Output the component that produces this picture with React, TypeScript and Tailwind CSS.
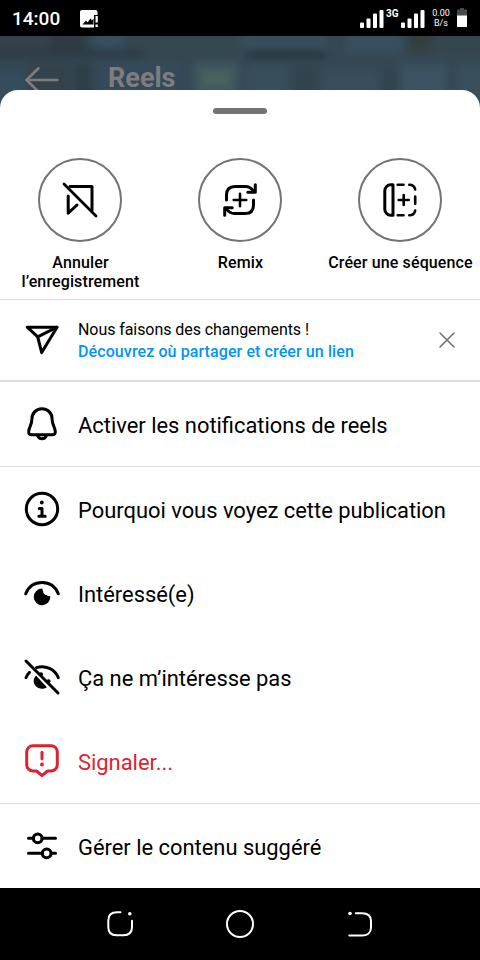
import React from 'react';
import clsx from 'clsx';

interface IconProps {
  children: React.ReactNode;
  className?: string;
}

/** 36px line icon; all the sheet icons are drawn on this grid. */
const Icon: React.FC<IconProps> = ({ children, className }) => (
  <svg
    viewBox="0 0 36 36"
    className={clsx('size-9 shrink-0 overflow-visible', className)}
    fill="none"
    stroke="currentColor"
    strokeWidth={3}
    strokeLinecap="round"
    strokeLinejoin="round"
    aria-hidden="true"
  >
    {children}
  </svg>
);

const UnsaveIcon = () => (
  <Icon>
    <path d="M2 2L34 34" strokeWidth={2.8} />
    <path d="M8 4.5H30V28.5" />
    <path d="M6.2 14V31.2L15 23" />
  </Icon>
);

const RemixIcon = () => (
  <Icon>
    <path d="M4.5 18V13C4.5 7.5 7.5 4.4 13 4.4H23.5C27.5 4.4 29.5 6 32 9.5" />
    <path d="M33.3 2.7V10.2H25.8" />
    <path d="M31.5 18V23C31.5 28.5 28.5 31.6 23 31.6H12.5C8.5 31.6 6.5 30 4 26.5" />
    <path d="M2.7 33.3V25.8H10.2" />
    <path d="M18 11.7V24.3M11.7 18H24.3" strokeWidth={2.6} />
  </Icon>
);

const SequenceIcon = () => (
  <Icon>
    <path d="M11 2.8H8.8A6 6 0 0 0 2.8 8.8V27.2A6 6 0 0 0 8.8 33.2H11Z" />
    <path
      d="M15.7 2.7H21.5M27.3 2.7A6 6 0 0 1 33.2 7.5M33.2 14.5V21.7M33.2 28.5A6 6 0 0 1 27.3 33.3M21.5 33.3H15.7"
      strokeWidth={2.6}
    />
    <path d="M21.7 13V23M16.7 18H26.7" strokeWidth={2.6} />
  </Icon>
);

const ShareIcon = () => (
  <Icon>
    <path d="M3.2 5.2H33L17.7 30.6L13.7 14.8Z" />
    <path d="M13.7 14.8L33 5.2" />
  </Icon>
);

const BellIcon = () => (
  <Icon>
    <path d="M18 2.8C11.7 2.8 7.9 7.5 7.9 13.3C7.9 19 5 20.5 4.7 25.5C4.6 27.7 5.6 28.7 7.5 28.7H28.5C30.4 28.7 31.4 27.7 31.3 25.5C31 20.5 28.1 19 28.1 13.3C28.1 7.5 24.3 2.8 18 2.8Z" />
    <path d="M13.5 29.5C14.3 31.7 15.9 32.7 18 32.7S21.7 31.7 22.5 29.5" />
  </Icon>
);

const InfoIcon = () => (
  <Icon>
    <circle cx="18" cy="18" r="15.7" />
    <circle cx="17.8" cy="11.5" r="1.9" fill="currentColor" stroke="none" />
    <path d="M15.2 17.5H18V25.2M14.8 25.3H21.2" />
  </Icon>
);

const EyeIcon = () => (
  <Icon>
    <path d="M1.7 18.8C4.5 12 10.5 7.6 18 7.6S31.5 12 34.3 18.8" />
    <path
      d="M18.4 13.6A8.3 8.3 0 1 0 26.3 21C24.5 21.4 23.5 20.9 22.5 20.1C20.5 19.8 19 18.3 19.2 16.2C18.5 15.3 18.2 14.5 18.4 13.6Z"
      fill="currentColor"
      stroke="none"
    />
  </Icon>
);

const EyeOffIcon = () => (
  <Icon>
    <path d="M2 2L34 34" />
    <path d="M2 18.7C2.9 16.5 3.9 15 5.5 13.3" />
    <path d="M12.5 8.6C21.5 5.7 31 10.2 34.3 18.7" />
    <path
      d="M12 16.5C9.2 19.5 8.8 24 11.7 27.1C14.6 30.200 19 30.700 22.900 28.300Z"
      fill="currentColor"
      stroke="none"
    />
    <g fill="currentColor" stroke="none">
      <circle cx="17" cy="15.3" r="2" />
      <circle cx="24.5" cy="22.3" r="2" />
    </g>
  </Icon>
);

const ReportIcon = () => (
  <Icon>
    <path d="M9 2.7H27A6.2 6.2 0 0 1 33.3 9V21.7A6.2 6.2 0 0 1 27 28H23.5L18 32.7L12.5 28H9A6.2 6.2 0 0 1 2.7 21.7V9A6.2 6.2 0 0 1 9 2.7Z" />
    <path d="M18 9.3V15.8" />
    <circle cx="18" cy="21.5" r="1.9" fill="currentColor" stroke="none" />
  </Icon>
);

const SlidersIcon = () => (
  <Icon>
    <path d="M4.5 10.3H9.4M18 10.3H31.5M4.5 25.3H18.4M27 25.3H31.5" />
    <circle cx="13.7" cy="10.3" r="4.4" />
    <circle cx="22.7" cy="25.3" r="4.4" />
  </Icon>
);

const SignalBars = () => (
  <svg viewBox="0 0 24 18" className="h-[18px] w-6 shrink-0" fill="white" aria-hidden="true">
    <rect x="0" y="12.5" width="4" height="5.5" rx="1" />
    <rect x="6.5" y="8.5" width="4" height="9.5" rx="1" />
    <rect x="13" y="3.5" width="4" height="14.5" rx="1" />
    <rect x="19.5" y="0" width="4" height="18" rx="1" />
  </svg>
);

const StatusBar = () => (
  <header className="flex h-9 items-center bg-black pl-3 pr-[13px] text-white">
    <span className="mt-px w-[68px] text-[19px] font-medium leading-9">14:00</span>
    <svg viewBox="0 0 19 18" className="mt-px h-[18px] w-[19px]" aria-hidden="true">
      <path d="M2 0H16A2 2 0 0 1 17.5 2V5H14V17.5H2A2 2 0 0 1 0 15.5V2A2 2 0 0 1 2 0Z" fill="white" />
      <path d="M2.5 14.5L6 10.5L7.5 12.5L10.5 8.5L12 10.5L13.5 8.5V14.5Z" fill="black" />
      <path d="M15.5 6H17.8V12.5H15.5ZM15.5 14.5H17.8V17H15.5Z" fill="white" />
    </svg>
    <div className="ml-auto mt-[2px] flex h-[18px] items-start">
      <SignalBars />
      <span className="ml-[2px] mr-[3px] w-3 text-[10px] font-bold leading-[7px]">3G</span>
      <SignalBars />
      <span className="-mt-[2px] ml-1 w-6 whitespace-nowrap text-center text-[9px] leading-[10px]">
        0.00
        <br />
        B/s
      </span>
      <svg viewBox="0 0 10 19" className="-mt-[2px] ml-1 h-[19px] w-[10px]" aria-hidden="true">
        <path d="M3 0H7V1.5H10V8H0V1.5H3Z" fill="#4a4a4a" />
        <path d="M0 7.5H10V19H0Z" fill="white" />
      </svg>
    </div>
  </header>
);

/** Dimmed video frame behind the sheet. */
const BrickWall = () => (
  <svg
    viewBox="0 0 480 90"
    className="absolute inset-x-0 top-0 h-[90px] w-[480px]"
    preserveAspectRatio="none"
    aria-hidden="true"
  >
    <defs>
      <filter id="soft" x="-5%" y="-5%" width="110%" height="110%" colorInterpolationFilters="sRGB">
        <feGaussianBlur stdDeviation="4" />
      </filter>
    </defs>
    <rect width="480" height="90" fill="#344753" />
    <g filter="url(#soft)">
      <rect x="-10" y="-10" width="500" height="110" fill="#344753" />
      <rect x="-10" y="-8" width="60" height="23" fill="#33424b" />
      <rect x="50" y="-8" width="36" height="22" fill="#2f3b42" />
      <rect x="94" y="-5" width="28" height="18" fill="#38505e" />
      <rect x="130" y="-8" width="110" height="24" fill="#35474f" />
      <rect x="240" y="-8" width="86" height="22" fill="#394e5c" />
      <rect x="-5" y="14" width="150" height="7" fill="#2b3943" />
      <rect x="246" y="15" width="80" height="7" fill="#27343b" />
      <rect x="346" y="-5" width="56" height="22" fill="#394f5e" />
      <rect x="408" y="-5" width="24" height="20" fill="#333e3e" />
      <rect x="440" y="-5" width="50" height="20" fill="#35464f" />
      <rect x="28" y="26" width="42" height="66" fill="#34424b" />
      <rect x="-8" y="36" width="34" height="62" fill="#344c5b" />
      <rect x="76" y="28" width="14" height="65" fill="#2e3d46" />
      <rect x="100" y="26" width="84" height="70" fill="#34495a" />
      <rect x="194" y="26" width="44" height="45" fill="#40585f" />
      <rect x="202" y="38" width="28" height="10" fill="#4c675f" />
      <rect x="246" y="28" width="42" height="70" fill="#384e5b" />
      <rect x="294" y="30" width="22" height="60" fill="#33434d" />
      <rect x="324" y="34" width="56" height="60" fill="#394e5a" />
      <rect x="384" y="32" width="12" height="60" fill="#32424d" />
      <rect x="400" y="28" width="46" height="66" fill="#3b5362" />
      <rect x="456" y="28" width="34" height="66" fill="#394f5b" />
    </g>
  </svg>
);

const ReelsHeader = () => (
  <div className="relative h-[54px]">
    <BrickWall />
    <div className="relative flex items-center pl-6 pt-[26px] text-[#7f7d7c]">
      <svg
        viewBox="0 0 36 36"
        className="size-9"
        fill="none"
        stroke="currentColor"
        strokeWidth="2.6"
        strokeLinecap="round"
        strokeLinejoin="round"
        aria-hidden="true"
      >
        <path d="M33.5 18H2.5M14.5 6.3L2.5 18L14.5 29.7" />
      </svg>
      <span className="-mt-1 ml-12 text-[27px] font-bold leading-[27px]">Reels</span>
    </div>
  </div>
);

interface ActionProps {
  icon: React.ReactNode;
  label: string;
}

const Action: React.FC<ActionProps> = ({ icon, label }) => (
  <button type="button" className="flex w-40 flex-col items-center">
    <span className="flex size-[84px] items-center justify-center rounded-full border-2 border-[#737373]">
      {icon}
    </span>
    <span className="mt-[11px] whitespace-pre pl-px text-center text-[16px] font-medium leading-[19px] tracking-[0.13px]">
      {label}
    </span>
  </button>
);

interface MenuRowProps {
  icon: React.ReactNode;
  label: string;
  danger?: boolean;
}

const MenuRow: React.FC<MenuRowProps> = ({ icon, label, danger = false }) => (
  <button
    type="button"
    className={clsx('flex h-[84px] w-full items-center px-6', danger && 'text-[#dc2334]')}
  >
    {icon}
    <span className="ml-[18px] mt-[3px] whitespace-nowrap text-[21.9px] leading-7">{label}</span>
  </button>
);

const Divider = ({ thick = false }: { thick?: boolean }) => (
  <div className={clsx('bg-[#dbdbdb]', thick ? 'h-[2px]' : 'h-px')} />
);

const Banner = () => (
  <div className="flex h-20 items-center px-6">
    <ShareIcon />
    <div className="ml-[18px] mt-px text-[16px] leading-[22px]">
      <p className="tracking-[-0.07px]">Nous faisons des changements !</p>
      <p className="font-medium tracking-[0.1px] text-[#0095f6]">Découvrez où partager et créer un lien</p>
    </div>
    <svg
      viewBox="0 0 18 18"
      className="ml-auto size-[18px]"
      stroke="#737373"
      strokeWidth="1.6"
      strokeLinecap="round"
      aria-label="Fermer"
    >
      <path d="M2 2L16 16M16 2L2 16" />
    </svg>
  </div>
);

const NavBar = () => (
  <nav className="flex h-[72px] items-center justify-center gap-[84px] bg-black">
    {['recent', 'home', 'back'].map((key) => (
      <svg
        key={key}
        viewBox="0 0 36 36"
        className="size-9"
        fill="none"
        stroke="white"
        strokeWidth="2"
        strokeLinecap="round"
        aria-hidden="true"
      >
        {key === 'recent' && (
          <>
            <path d="M18.5 6.3H15C9 6.3 6.3 9 6.3 14.5V21C6.3 27.5 9.5 29.3 14.5 29.3H21.5C27.5 29.3 30 26.5 30 21V14.8" />
            <circle cx="27.8" cy="7.8" r="1.8" fill="white" stroke="none" />
          </>
        )}
        {key === 'home' && <circle cx="18" cy="18" r="13" />}
        {key === 'back' && (
          <>
            <path d="M13.8 7.3H20C26.5 7.3 29 10.5 29 15V21.5C29 26.5 25.5 29.6 20 29.6H7.3" />
            <circle cx="8" cy="7.5" r="1.8" fill="white" stroke="none" />
          </>
        )}
      </svg>
    ))}
  </nav>
);

export default function App() {
  return (
    <div className="flex h-[960px] w-[480px] flex-col overflow-hidden bg-black font-[Roboto,sans-serif] text-black">
      <StatusBar />
      <ReelsHeader />
      <main className="relative h-[798px] rounded-t-[18px] bg-white">
        <div className="flex h-[68px] justify-center pt-[18px]">
          <div className="h-[6px] w-[54px] rounded-full bg-[#737373]" />
        </div>
        <div className="flex h-[141px] items-start">
          <Action icon={<UnsaveIcon />} label={'Annuler\nl’enregistrement'} />
          <Action icon={<RemixIcon />} label="Remix" />
          <Action icon={<SequenceIcon />} label="Créer une séquence" />
        </div>
        <Divider />
        <Banner />
        <Divider thick />
        <MenuRow icon={<BellIcon />} label="Activer les notifications de reels" />
        <Divider />
        <MenuRow icon={<InfoIcon />} label="Pourquoi vous voyez cette publication" />
        <MenuRow icon={<EyeIcon />} label="Intéressé(e)" />
        <MenuRow icon={<EyeOffIcon />} label="Ça ne m’intéresse pas" />
        <MenuRow icon={<ReportIcon />} label="Signaler..." danger />
        <Divider />
        <MenuRow icon={<SlidersIcon />} label="Gérer le contenu suggéré" />
      </main>
      <NavBar />
    </div>
  );
}
